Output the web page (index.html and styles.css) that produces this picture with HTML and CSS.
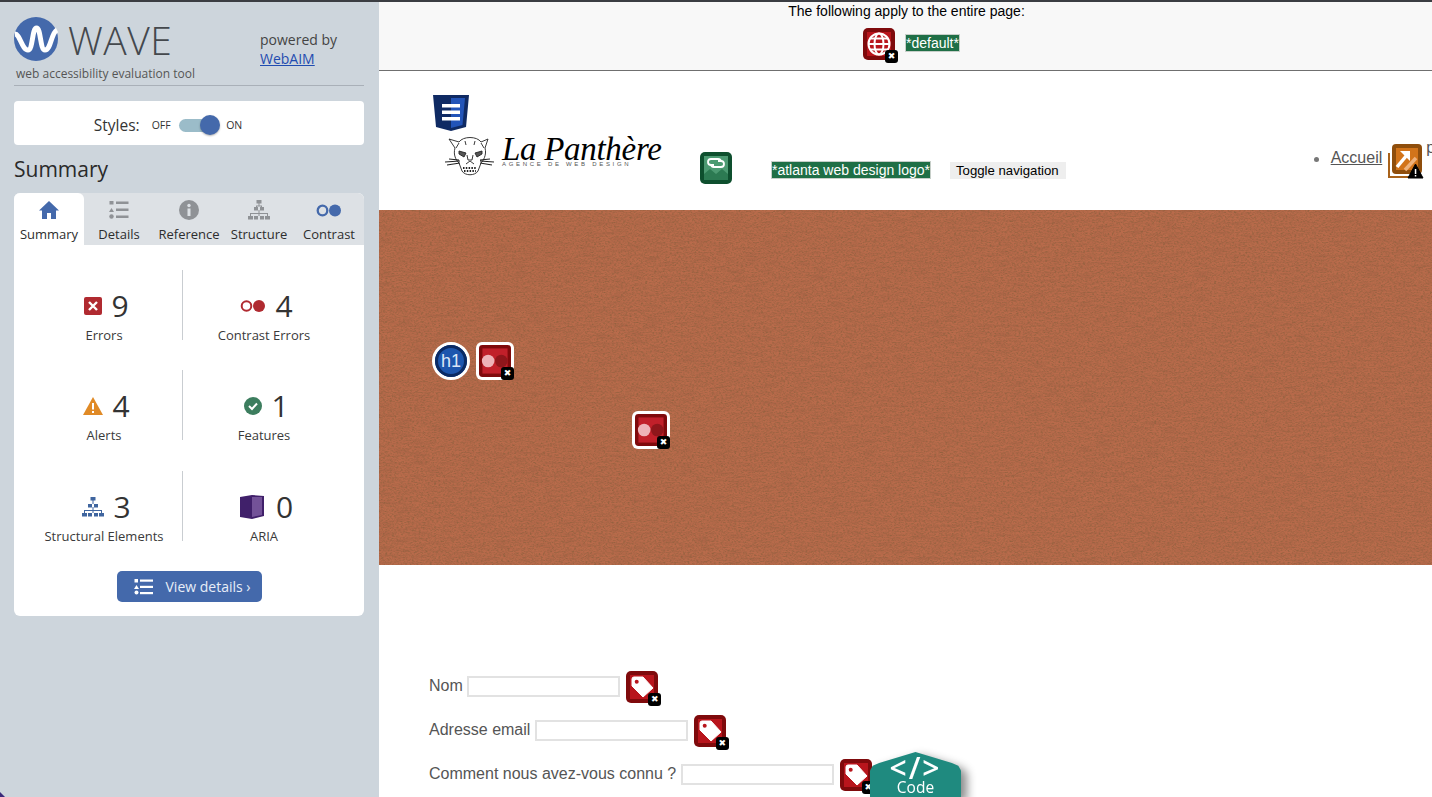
FILE: index.html
```html
<!DOCTYPE html>
<html lang="fr">
<head>
  <meta charset="UTF-8">
  <meta name="viewport" content="width=device-width, initial-scale=1.0">
  <title>WAVE - La Panthère</title>
  <link rel="stylesheet" href="styles.css">
</head>
<body>
  <aside class="sidebar">
    <div class="brand">
      <div class="brand-left">
        <div class="brand-logo">
          <svg width="44" height="44" viewBox="0 0 44 44">
            <circle cx="22" cy="22" r="22" fill="#4469ab"/>
            <path d="M1 17C6 17 8 33 14 33 19 33 18 11 22.500 11 27 11 26 33 31 33 37 33 37 16 43 13" fill="none" stroke="#fff" stroke-width="5"/>
          </svg>
          <span class="brand-name">WAVE</span>
        </div>
        <div class="brand-tagline">web accessibility evaluation tool</div>
      </div>
      <div class="brand-powered">powered by<br><a href="#">WebAIM</a></div>
    </div>

    <div class="styles-box">
      <span class="styles-label">Styles:</span>
      <span class="styles-state">OFF</span>
      <span class="switch"><span class="switch-knob"></span></span>
      <span class="styles-state">ON</span>
    </div>

    <h2 class="panel-title">Summary</h2>

    <div class="panel">
      <div class="tabs">
        <div class="tab active">
          <svg width="20" height="20" viewBox="0 0 20 20"><path d="M10 1 0 10.500h3V19h5v-6h4v6h5v-8.500h3z" fill="#4469ab"/></svg>
          <span>Summary</span>
        </div>
        <div class="tab">
          <svg width="20" height="20" viewBox="0 0 20 20" fill="#8f9296"><rect x="0.500" y="1" width="4" height="3.500"/><path d="M2.500 8 5 12H0z"/><circle cx="2.500" cy="16.500" r="2.200"/><rect x="7" y="1.500" width="12.500" height="2.500"/><rect x="7" y="8.500" width="12.500" height="2.500"/><rect x="7" y="15.500" width="12.500" height="2.500"/></svg>
          <span>Details</span>
        </div>
        <div class="tab">
          <svg width="20" height="20" viewBox="0 0 20 20"><circle cx="10" cy="10" r="10" fill="#8f9296"/><circle cx="10" cy="5.500" r="1.700" fill="#dde1e5"/><rect x="8.500" y="8.500" width="3" height="7.500" fill="#dde1e5"/></svg>
          <span>Reference</span>
        </div>
        <div class="tab">
          <svg width="22" height="20" viewBox="0 0 22 20" fill="#8f9296"><rect x="8.500" y="0" width="5" height="3.500"/><rect x="6" y="7" width="4" height="3.500"/><rect x="12" y="7" width="4" height="3.500"/><rect x="0" y="16" width="5" height="3.500"/><rect x="6" y="16" width="4" height="3.500"/><rect x="12" y="16" width="4" height="3.500"/><rect x="17" y="16" width="5" height="3.500"/><path d="M10.500 3h1v3h-1zM2 13h18v3h-1v-2h-7.500v2h-1v-2H3v2H2zM8 5.500h6V7h-1v-.5H9V7H8zM10.500 10h1v3h-1z"/></svg>
          <span>Structure</span>
        </div>
        <div class="tab">
          <svg width="26" height="20" viewBox="0 -3.500 26 20"><circle cx="6.500" cy="7" r="4.800" fill="none" stroke="#4469ab" stroke-width="2.300"/><circle cx="19" cy="7" r="6" fill="#4469ab"/></svg>
          <span>Contrast</span>
        </div>
      </div>

      <div class="stats">
        <div class="stat">
          <div class="stat-top">
            <svg width="18" height="18" viewBox="0 0 18 18"><rect width="18" height="18" rx="2" fill="#b02a30"/><path d="m5 5 8 8m0-8-8 8" stroke="#fff" stroke-width="2.400"/></svg>
            <span class="stat-num">9</span>
          </div>
          <div class="stat-label">Errors</div>
        </div>
        <div class="stat">
          <div class="stat-top">
            <svg width="26" height="14" viewBox="0 0 26 14"><circle cx="6.500" cy="7" r="4.800" fill="none" stroke="#b02a30" stroke-width="2"/><circle cx="19" cy="7" r="6" fill="#b02a30"/></svg>
            <span class="stat-num">4</span>
          </div>
          <div class="stat-label">Contrast Errors</div>
        </div>
        <div class="stat">
          <div class="stat-top">
            <svg width="20" height="18" viewBox="0 0 20 18"><path d="M10 0 20 18H0z" fill="#e08a26"/><rect x="9" y="6" width="2" height="6.500" fill="#fff"/><rect x="9" y="14" width="2" height="2" fill="#fff"/></svg>
            <span class="stat-num">4</span>
          </div>
          <div class="stat-label">Alerts</div>
        </div>
        <div class="stat">
          <div class="stat-top">
            <svg width="18" height="18" viewBox="0 0 18 18"><circle cx="9" cy="9" r="9" fill="#3c7d5e"/><path d="m5 9 3 3 5-5.500" fill="none" stroke="#fff" stroke-width="2"/></svg>
            <span class="stat-num">1</span>
          </div>
          <div class="stat-label">Features</div>
        </div>
        <div class="stat">
          <div class="stat-top">
            <svg width="22" height="20" viewBox="0 0 22 20" fill="#3f659f"><rect x="8.500" y="0" width="5" height="3.500"/><rect x="6" y="7" width="4" height="3.500"/><rect x="12" y="7" width="4" height="3.500"/><rect x="0" y="16" width="5" height="3.500"/><rect x="6" y="16" width="4" height="3.500"/><rect x="12" y="16" width="4" height="3.500"/><rect x="17" y="16" width="5" height="3.500"/><path d="M10.500 3h1v4h-1zM2 13h18v3h-1v-2h-7.500v2h-1v-2H3v2H2zM10.500 10h1v3h-1z"/></svg>
            <span class="stat-num">3</span>
          </div>
          <div class="stat-label">Structural Elements</div>
        </div>
        <div class="stat">
          <div class="stat-top">
            <svg width="24" height="24" viewBox="0 0 24 24"><path d="M0 2 12 0l12 1v20l-12 3-12-2z" fill="#40206a"/><path d="M12 2h10v18l-10 2z" fill="#735298"/></svg>
            <span class="stat-num">0</span>
          </div>
          <div class="stat-label">ARIA</div>
        </div>
      </div>

      <div class="panel-foot">
        <a class="details-btn" href="#">
          <svg width="19" height="16" viewBox="0 0 19 16" fill="#fff"><rect x="0.500" y="0" width="3.500" height="3.500"/><path d="M2.500 6 5 10H0z"/><circle cx="2.500" cy="13.500" r="2"/><rect x="6" y="0.500" width="13" height="2.200"/><rect x="6" y="6.800" width="13" height="2.200"/><rect x="6" y="13" width="13" height="2.200"/></svg>
          <span>View details ›</span>
        </a>
      </div>
    </div>
  </aside>

  <main class="page">
    <div class="page-notice">
      <div class="notice-text">The following apply to the entire page:</div>
      <div class="notice-items">
        <span class="wave-icon">
          <svg width="32" height="32" viewBox="0 0 32 32">
            <rect width="32" height="32" rx="5" fill="#7f0a0c"/><rect x="4" y="4" width="24" height="24" fill="#b8151c"/>
            <g fill="none" stroke="#fff" stroke-width="2"><circle cx="16" cy="16" r="10.500"/><ellipse cx="16" cy="16" rx="4.500" ry="10.500"/><path d="M5.500 16h21M7 10.500h18M7 21.500h18"/></g>
          </svg>
          <span class="icon-x">✖</span>
        </span>
        <span class="green-tag">*default*</span>
      </div>
    </div>

    <header class="site-header">
      <div class="brand-col">
        <svg class="shield" width="36" height="36" viewBox="0 0 36 36">
          <path d="M0 0h36l-3 32-15 4-15-4z" fill="#0f2a63"/><path d="M18 3h14l-2.500 27L18 33z" fill="#2254b8"/>
          <rect x="9" y="9" width="18" height="3.500" fill="#fff"/><rect x="9" y="15.500" width="18" height="3.500" fill="#fff"/><rect x="9" y="22" width="18" height="3.500" fill="#fff"/>
        </svg>
        <div class="site-logo">
          <svg class="panther" width="50" height="42" viewBox="0 0 50 42" fill="none" stroke="#222" stroke-width="0.900">
            <path d="M4 4 14 7C18 1 32 1 36 7L43 4 40 13C42 20 38 26 36 28L33 36C30 41 20 41 17 36L14 28C11 25 8 20 10 13Z"/>
            <path d="M14 8 11 13M36 8l3 5M20 6l1 4M30 6l-1 4"/>
            <path d="M14 16l7 2-2 4-5-3zM37 16l-7 2 2 4 5-3z" fill="#555"/>
            <path d="M22 20l1 5h4l1-5M21 29l4-3 4 3"/>
            <path d="M18 33h14M19 36h12" stroke-width="2.200" stroke-dasharray="1.500 1.300"/>
            <path d="M0 27 15 26M2 30l13-2M4 24l10 1M49 27 35 26M47 30l-12-2M45 24l-10 1" stroke-width="1.100"/>
          </svg>
          <div class="site-logo-text">
            <span class="logo-name">La Panthère</span>
            <span class="logo-sub">AGENCE DE WEB DESIGN</span>
          </div>
        </div>
      </div>
      <span class="green-box">
        <svg width="32" height="32" viewBox="0 0 32 32">
          <rect width="32" height="32" rx="5" fill="#0e4f2e"/><rect x="4" y="4" width="24" height="24" fill="#4c9a72"/>
          <path d="M4 28v-6l6-5 6 5 6-5 6 5v6z" fill="#2c7a52"/>
          <g fill="none" stroke="#fff" stroke-width="1.800"><path d="M14 13h-3a3 3 0 0 1 0-6h7a3 3 0 0 1 3 3"/><path d="M18 9h3a3 3 0 0 1 0 6h-7a3 3 0 0 1-3-3"/></g>
        </svg>
      </span>
      <span class="green-tag logo-tag">*atlanta web design logo*</span>
      <span class="nav-toggle">Toggle navigation</span>
      <nav class="site-nav">
        <span class="nav-bullet"></span>
        <a href="#">Accueil</a>
        <span class="wave-icon alert-icon">
          <svg width="36" height="36" viewBox="0 0 36 36">
            <path d="M1 9v24h22" fill="none" stroke="#a8621b" stroke-width="2"/>
            <rect x="4" y="0" width="30" height="30" rx="4" fill="#8f4e0c"/><rect x="8" y="4" width="22" height="22" fill="#d2741a"/>
            <path d="M17 26 28 14" stroke="#eeb27c" stroke-width="3.500"/><path d="M9 23 19 11" stroke="#fff" stroke-width="3.500"/><path d="M12 7h10v10z" fill="#fff"/>
            <path d="M27.500 20 35 34H20z" fill="#000" stroke="#000"/><rect x="26.800" y="25" width="1.500" height="5" fill="#fff"/><rect x="26.800" y="31" width="1.500" height="1.500" fill="#fff"/>
          </svg>
        </span>
        <span class="nav-next">p</span>
      </nav>
    </header>

    <section class="hero">
      <svg class="hero-grain" width="100%" height="100%">
        <filter id="grain"><feTurbulence type="fractalNoise" baseFrequency="0.45 0.8" numOctaves="3" seed="4"/><feColorMatrix values="0 0 0 0 0.3  0 0 0 0 0.12  0 0 0 0 0.05  1.500 1.500 0 0 -1.300"/></filter>
        <filter id="weave"><feTurbulence type="fractalNoise" baseFrequency="0.06 0.4" numOctaves="2" seed="9"/><feColorMatrix values="0 0 0 0 0.3  0 0 0 0 0.1  0 0 0 0 0.05  0.5 0.5 0 0 -0.42"/></filter>
        <rect width="100%" height="100%" filter="url(#weave)"/>
        <rect width="100%" height="100%" filter="url(#grain)"/>
      </svg>
      <span class="hero-icon hero-h1">h1</span>
      <span class="hero-icon hero-square hero-square-a">
        <svg width="28" height="28" viewBox="0 0 28 28"><rect width="28" height="28" rx="3" fill="#7f0a0c"/><rect x="3" y="3" width="22" height="22" fill="#c1202a"/><circle cx="19.500" cy="14" r="5.500" fill="#8f161b"/><circle cx="8" cy="14" r="5.500" fill="#eeb3b8"/></svg>
        <span class="icon-x">✖</span>
      </span>
      <span class="hero-icon hero-square hero-square-b">
        <svg width="28" height="28" viewBox="0 0 28 28"><rect width="28" height="28" rx="3" fill="#7f0a0c"/><rect x="3" y="3" width="22" height="22" fill="#c1202a"/><circle cx="19.500" cy="14" r="5.500" fill="#8f161b"/><circle cx="8" cy="14" r="5.500" fill="#eeb3b8"/></svg>
        <span class="icon-x">✖</span>
      </span>
    </section>

    <form class="contact">
      <div class="field">
        <label>Nom</label><input type="text">
        <span class="wave-icon">
          <svg width="32" height="32" viewBox="0 0 32 32"><rect width="32" height="32" rx="5" fill="#7f0a0c"/><rect x="4" y="4" width="24" height="24" fill="#b8151c"/><path d="M6 8a2 2 0 0 1 2-2h9l10 11-10 9L6 15z" fill="#fff" stroke="#fff" stroke-linejoin="round"/><circle cx="10.700" cy="10.700" r="2" fill="#b8151c"/></svg>
          <span class="icon-x">✖</span>
        </span>
      </div>
      <div class="field">
        <label>Adresse email</label><input type="text">
        <span class="wave-icon">
          <svg width="32" height="32" viewBox="0 0 32 32"><rect width="32" height="32" rx="5" fill="#7f0a0c"/><rect x="4" y="4" width="24" height="24" fill="#b8151c"/><path d="M6 8a2 2 0 0 1 2-2h9l10 11-10 9L6 15z" fill="#fff" stroke="#fff" stroke-linejoin="round"/><circle cx="10.700" cy="10.700" r="2" fill="#b8151c"/></svg>
          <span class="icon-x">✖</span>
        </span>
      </div>
      <div class="field">
        <label>Comment nous avez-vous connu ?</label><input type="text">
        <span class="wave-icon">
          <svg width="32" height="32" viewBox="0 0 32 32"><rect width="32" height="32" rx="5" fill="#7f0a0c"/><rect x="4" y="4" width="24" height="24" fill="#b8151c"/><path d="M6 8a2 2 0 0 1 2-2h9l10 11-10 9L6 15z" fill="#fff" stroke="#fff" stroke-linejoin="round"/><circle cx="10.700" cy="10.700" r="2" fill="#b8151c"/></svg>
          <span class="icon-x">✖</span>
        </span>
      </div>
    </form>

    <div class="code-tab">
      <div class="code-shape">
        <span class="code-mark">&lt;/&gt;</span>
        <span class="code-label">Code</span>
      </div>
    </div>
  </main>
</body>
</html>
```

FILE: styles.css
```css
* {
  box-sizing: border-box;
}

html, body {
  height: 100%;
}

body {
  margin: 0;
  display: flex;
  height: 797px;
  overflow: hidden;
  border-top: 2px solid #3b3d42;
  font-family: "Liberation Sans", Arial, sans-serif;
  background: #fff;
}

/* sidebar */

.sidebar {
  position: relative;
  width: 379px;
  flex-shrink: 0;
  padding: 14px 15px 0 14px;
  background: #cdd5dc;
  font-family: "Open Sans", sans-serif;
  color: #333;
}

.sidebar::after {
  content: "";
  position: absolute;
  left: 0;
  bottom: 0;
  width: 5px;
  height: 5px;
  background: #3b2a7a;
  clip-path: polygon(0 0, 100% 100%, 0 100%);
}

.brand {
  display: flex;
  justify-content: space-between;
  height: 70px;
  border-bottom: 1px solid #a9b0b8;
}

.brand-logo {
  display: flex;
  align-items: center;
  gap: 10px;
  height: 46px;
}

.brand-name {
  font-size: 39px;
  font-weight: 300;
  letter-spacing: 0.5px;
  color: #44484d;
}

.brand-tagline {
  margin: 3px 0 0 2px;
  font-size: 12px;
  color: #555;
}

.brand-powered {
  width: 104px;
  padding-top: 15px;
  font-size: 14px;
  line-height: 18.500px;
  color: #444;
}

.brand-powered a {
  color: #1f4cb0;
}

.styles-box {
  display: flex;
  align-items: center;
  justify-content: center;
  height: 44px;
  margin-top: 15px;
  padding: 4px 42px 0 0;
  background: #fff;
  border-radius: 4px;
}

.styles-label {
  margin-right: 12px;
  font-size: 15.500px;
}

.styles-state {
  font-size: 10.500px;
}

.switch {
  position: relative;
  width: 36px;
  height: 13px;
  margin: 0 11px 0 8.500px;
  background: #9bbcc9;
  border-radius: 7px;
}

.switch-knob {
  position: absolute;
  top: -3.500px;
  right: -5px;
  width: 20px;
  height: 20px;
  background: #4469ab;
  border-radius: 50%;
  box-shadow: 0 1px 2px rgba(0, 0, 0, 0.3);
}

.panel-title {
  margin: 9px 0 9px;
  font-size: 21px;
  font-weight: 400;
  line-height: 30px;
  color: #2a2a2a;
}

.panel {
  height: 423px;
  background: #fff;
  border-radius: 6px;
}

.tabs {
  display: flex;
  height: 52px;
  background: #dde1e5;
  border-radius: 6px 6px 0 0;
}

.tab {
  flex: 1;
  display: flex;
  flex-direction: column;
  align-items: center;
  justify-content: space-between;
  padding: 7px 0 2px;
  font-size: 13px;
  line-height: 17px;
  color: #2d2d2d;
  white-space: nowrap;
}

.tab.active {
  background: #fff;
  border-radius: 6px 6px 0 0;
}

.stats {
  display: grid;
  grid-template-columns: 157px 162px;
  row-gap: 30px;
  padding: 25px 0 0 12px;
}

.stat {
  display: flex;
  flex-direction: column;
  align-items: center;
  height: 70px;
}

.stat:nth-child(n+5) {
  margin-top: 1px;
}

.stat:nth-child(odd) {
  border-right: 1px solid #c9cdd1;
}

.stat-top {
  display: flex;
  align-items: center;
  justify-content: center;
  gap: 9px;
  height: 40px;
  margin-top: 16px;
  padding-left: 5px;
}

.stat:last-child .stat-top {
  gap: 12px;
}

.stat-num {
  font-size: 30px;
  line-height: 40px;
  color: #333;
}

.stat-label {
  margin-top: 0;
  font-size: 13px;
  line-height: 18px;
  color: #3a3a3a;
}

.panel-foot {
  display: flex;
  justify-content: center;
  margin-top: 30px;
}

.details-btn {
  display: flex;
  align-items: center;
  gap: 13px;
  width: 145px;
  height: 31px;
  padding-left: 17px;
  background: #4469ab;
  border-radius: 5px;
  font-size: 14px;
  color: #e8eef8;
  text-decoration: none;
}

/* page */

.page {
  position: relative;
  flex: 1;
  min-width: 0;
  overflow: hidden;
  background: #fff;
}

.page-notice {
  height: 69px;
  padding-top: 1px;
  background: #f8f8f8;
  border-bottom: 1px solid #6f6f6f;
  text-align: center;
  font-size: 14px;
  color: #000;
}

.notice-text {
  padding-left: 2px;
  line-height: 17px;
}

.notice-items {
  display: flex;
  justify-content: center;
  align-items: center;
  gap: 10px;
  margin-top: 8px;
  padding-left: 12px;
}

.notice-items .green-tag {
  margin-bottom: 2px;
}

.wave-icon {
  position: relative;
  display: inline-block;
  width: 32px;
  height: 32px;
  flex-shrink: 0;
}

.icon-x {
  position: absolute;
  right: -3px;
  bottom: -3px;
  width: 13px;
  height: 13px;
  background: #000;
  border-radius: 3px;
  color: #fff;
  font-family: "DejaVu Sans", sans-serif;
  font-size: 9px;
  line-height: 13px;
  text-align: center;
}

.green-tag {
  padding: 0 1px;
  background: #1f6f46;
  outline: 1px solid #c7cfc9;
  outline-offset: -1px;
  color: #fff;
  font-size: 14px;
  line-height: 18px;
}

.site-header {
  display: flex;
  align-items: flex-start;
  height: 139px;
  padding-left: 54px;
}

.brand-col {
  width: 267px;
  flex-shrink: 0;
  padding-top: 24px;
}

.shield {
  display: block;
}

.site-logo {
  display: flex;
  align-items: flex-start;
  gap: 7px;
  margin: 4px 0 0 12px;
}

.site-logo-text {
  position: relative;
  height: 40px;
}

.logo-name {
  display: block;
  font-family: "Liberation Serif", serif;
  font-style: italic;
  font-size: 33px;
  letter-spacing: -0.300px;
  line-height: 29px;
  color: #000;
  white-space: nowrap;
}

.logo-sub {
  position: absolute;
  left: 0;
  top: 26px;
  font-size: 6px;
  line-height: 6px;
  letter-spacing: 2.700px;
  color: #555;
  white-space: nowrap;
}

.green-box {
  width: 32px;
  height: 32px;
  margin-top: 81px;
  flex-shrink: 0;
}

.logo-tag {
  margin: 90px 0 0 39px;
  white-space: nowrap;
}

.nav-toggle {
  margin: 91px 0 0 19px;
  padding: 0 7px 0 6px;
  background: #eeeeee;
  color: #000;
  font-size: 13.200px;
  line-height: 17px;
  white-space: nowrap;
}

.site-nav {
  display: flex;
  align-items: flex-start;
  margin: 75px 0 0 248px;
  font-size: 16px;
  color: #555;
  white-space: nowrap;
}

.nav-bullet {
  width: 5px;
  height: 5px;
  margin: 11px 12px 0 0;
  background: #777;
  border-radius: 50%;
}

.site-nav a {
  margin-top: 3px;
  color: #555;
}

.alert-icon {
  width: 36px;
  height: 36px;
  margin: -2px 0 0 6px;
}

.nav-next {
  margin: -7px 0 0 2px;
}

.hero {
  position: relative;
  height: 355px;
  background: #b96b4b;
  overflow: hidden;
}

.hero-grain {
  position: absolute;
  inset: 0;
}

.hero-icon {
  position: absolute;
}

.hero-h1 {
  left: 53px;
  top: 132px;
  width: 38px;
  height: 38px;
  background: #1d56ae;
  border: 3px solid #fff;
  outline: 3px solid #0b2a63;
  outline-offset: -6px;
  border-radius: 50%;
  color: #dce6f7;
  font-size: 18px;
  line-height: 32px;
  text-align: center;
}

.hero-square {
  display: block;
  width: 38px;
  height: 38px;
  padding: 3px;
  background: #fff;
  border-radius: 6px;
}

.hero-square svg {
  display: block;
  width: 32px;
  height: 32px;
}

.hero-square .icon-x {
  right: 0;
  bottom: 0;
}

.hero-square-a {
  left: 97px;
  top: 132px;
}

.hero-square-b {
  left: 253px;
  top: 201px;
}

.contact {
  padding: 106px 0 0 50px;
  font-size: 16px;
  color: #555;
}

.field {
  display: flex;
  align-items: flex-start;
  height: 44px;
  white-space: nowrap;
}

.field label {
  margin-top: 6px;
  line-height: 18px;
}

.field input {
  width: 153px;
  height: 21px;
  margin: 5px 0 0 4.500px;
  padding: 0;
  border: 2px solid #e2e2e2;
  background: #fff;
}

.field .wave-icon {
  margin-left: 6px;
}

.code-tab {
  position: absolute;
  left: 491px;
  top: 750px;
  filter: drop-shadow(6px 4px 5px rgba(0, 0, 0, 0.45));
}

.code-shape {
  display: flex;
  flex-direction: column;
  align-items: center;
  width: 91px;
  height: 46px;
  background: #1f8a7f;
  clip-path: polygon(0 40%, 3% 30%, 10% 24%, 50% 0, 90% 24%, 97% 30%, 100% 40%, 100% 100%, 0 100%);
  color: #fff;
  font-family: "Open Sans", sans-serif;
}

.code-mark {
  margin-top: 4px;
  font-size: 30px;
  font-weight: 600;
  line-height: 24px;
  letter-spacing: 2px;
}

.code-label {
  font-size: 15.500px;
  line-height: 15px;
}
```
